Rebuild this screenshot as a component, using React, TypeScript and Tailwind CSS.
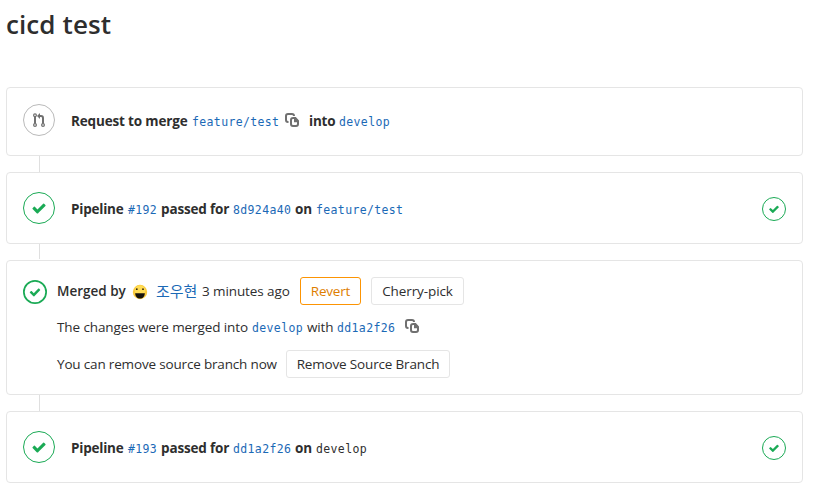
import type { ReactNode } from 'react';

const SANS = "font-['Open_Sans','Noto_Sans_CJK_KR',sans-serif]";

const CHECK =
  'M6.278 7.697L5.045 6.464a.296.296 0 0 0-.42-.002l-.613.614a.298.298 0 0 0 .002.42l1.91 1.909a.5.5 0 0 0 .703.005l.265-.265L9.997 6.04a.291.291 0 0 0-.009-.408l-.614-.614a.29.29 0 0 0-.408-.009L6.278 7.697z';

function Check({ className }: { className: string }) {
  return (
    <span className={`flex shrink-0 items-center justify-center rounded-full border border-[#1aaa55] ${className}`}>
      <svg viewBox="0 0 14 14" className="size-full shrink-0" fill="#1aaa55">
        <path d={CHECK} />
      </svg>
    </span>
  );
}

function MergedStatus() {
  return (
    <svg viewBox="0 0 14 14" className="size-6 shrink-0" fill="#1aaa55">
      <path fillRule="evenodd" d="M0 7a7 7 0 1 1 14 0A7 7 0 0 1 0 7zm13 0A6 6 0 1 0 1 7a6 6 0 0 0 12 0z" />
      <path d={CHECK} />
    </svg>
  );
}

function CopyIcon() {
  return (
    <svg viewBox="0 0 16 16" className="size-4 shrink-0" fill="none" stroke="#707070" strokeWidth="2">
      <path d="M4.5 10H4a2 2 0 0 1-2-2V4a2 2 0 0 1 2-2h4a2 2 0 0 1 2 2" />
      <path d="M8.5 6h2.9L14 8.8V12a2 2 0 0 1-2 2H9a2 2 0 0 1-2-2V8a2 2 0 0 1 2-2z" />
      <path d="M10 5.5v4.7h4.5L13.5 7.5z" fill="#707070" stroke="none" />
    </svg>
  );
}

function MergeRequestIcon() {
  return (
    <svg viewBox="0 0 16 16" className="size-4" fill="none" stroke="#707070">
      <path d="M4 4v8M12 12V6a2 2 0 0 0-2-2H8" strokeWidth="2" />
      <path d="M9 1v6L6 4z" fill="#707070" stroke="none" />
      <circle cx="4" cy="3.3" r="1.4" fill="#fff" strokeWidth="1.2" />
      <circle cx="4" cy="13" r="1.4" fill="#fff" strokeWidth="1.2" />
      <circle cx="12" cy="13" r="1.4" fill="#fff" strokeWidth="1.2" />
    </svg>
  );
}

function Avatar() {
  return (
    <svg viewBox="0 0 16 16" className="size-4 shrink-0">
      <circle cx="8" cy="8" r="7.2" fill="#fbcb3c" />
      <circle cx="8" cy="6.5" r="5.2" fill="#ffdc55" />
      <circle cx="4.8" cy="5.2" r="0.9" fill="#33240d" />
      <circle cx="11" cy="5.2" r="0.9" fill="#33240d" />
      <path d="M3.2 9.2h9.6c0 3-1.8 5.4-4.8 5.4S3.2 12.2 3.2 9.2z" fill="#17120b" />
    </svg>
  );
}

function T({ className, children }: { className: string; children: ReactNode }) {
  return <span className={`shrink-0 whitespace-nowrap ${className}`}>{children}</span>;
}

function Mono({ className, children }: { className: string; children: ReactNode }) {
  return (
    <span
      className={`shrink-0 whitespace-nowrap pt-px font-['DejaVu_Sans_Mono',monospace] text-[11.5px] tracking-[0.36px] ${className}`}
    >
      {children}
    </span>
  );
}

function Button({ className, children }: { className: string; children: ReactNode }) {
  return (
    <button className={`flex h-7 shrink-0 items-center justify-center whitespace-nowrap rounded-[3px] border ${className}`}>
      {children}
    </button>
  );
}

function Connector({ className }: { className: string }) {
  return <div className={`ml-[33px] w-px bg-[#dfdfdf] ${className}`} />;
}

const CARD = 'flex rounded-[4px] border border-[#e5e5e5] bg-white px-4';

function PipelineCard({ id, sha, children }: { id: string; sha: string; children: ReactNode }) {
  return (
    <section className={`${CARD} h-[72px] pt-[19px]`}>
      <Check className="size-8" />
      <div className="ml-4 flex h-[34px] flex-1 items-center">
        <T className="w-[57px] font-bold tracking-[-0.22px]">Pipeline</T>
        <Mono className="w-[33px] text-[#1b69b6]">{id}</Mono>
        <T className="w-[72px] font-bold tracking-[-0.16px]">passed for</T>
        <Mono className="w-[62px] text-[#1b69b6]">{sha}</Mono>
        <T className="w-[21px] font-bold tracking-[-0.1px]">on</T>
        {children}
      </div>
      <Check className="mt-[5px] size-6" />
    </section>
  );
}

export default function App() {
  return (
    <main className={`h-[492px] w-[815px] overflow-hidden bg-white pl-1.5 pr-3 text-[13.5px] leading-5 text-[#2e2e2e] ${SANS}`}>
      <h1 className="h-[87px] pt-[7px] text-[26px] font-semibold leading-[34px] tracking-[0.1px]">cicd test</h1>

      <section className={`${CARD} h-[69px] pt-4`}>
        <span className="flex size-8 shrink-0 items-center justify-center rounded-full border border-[#bababa]">
          <MergeRequestIcon />
        </span>
        <div className="ml-4 flex h-[34px] items-center">
          <T className="w-[121px] font-bold tracking-[-0.16px]">Request to merge</T>
          <Mono className="w-[92px] text-[#1b69b6]">feature/test</Mono>
          <span className="mb-0.5 w-[25px]">
            <CopyIcon />
          </span>
          <T className="w-[30px] font-bold tracking-[-0.22px]">into</T>
          <Mono className="text-[#1b69b6]">develop</Mono>
        </div>
      </section>
      <Connector className="h-4" />

      <PipelineCard id="#192" sha="8d924a40">
        <Mono className="text-[#1b69b6]">feature/test</Mono>
      </PipelineCard>
      <Connector className="mb-px h-[15px]" />

      <section className={`${CARD} h-[135px] pt-4`}>
        <div className="pt-[3px]">
          <MergedStatus />
        </div>
        <div className="ml-2.5 flex-1 tracking-[-0.17px]">
          <div className="flex h-7 items-center">
            <T className="w-[75px] font-semibold tracking-[0px]">Merged by</T>
            <span className="mt-0.5 w-6">
              <Avatar />
            </span>
            <T className="w-[46px] text-[15px] tracking-[0px] text-[#1b69b6]">조우현</T>
            <T className="w-[98px] tracking-[-0.1px]">3 minutes ago</T>
            <Button className="mr-2.5 w-[61px] border-[#fc9403] text-[#de7e00]">Revert</Button>
            <Button className="w-[93px] border-[#e5e5e5] tracking-[-0.1px]">Cherry-pick</Button>
          </div>
          <div className="mt-2 flex h-7 items-center">
            <T className="w-[195px] tracking-[-0.1px]">The changes were merged into</T>
            <Mono className="w-[55px] text-[#1b69b6]">develop</Mono>
            <T className="w-[30px]">with</T>
            <Mono className="w-[67px] text-[#1b69b6]">dd1a2f26</Mono>
            <span className="mb-0.5">
              <CopyIcon />
            </span>
          </div>
          <div className="mt-[9px] flex h-7 items-center">
            <T className="w-[229px]">You can remove source branch now</T>
            <Button className="w-[164px] border-[#e5e5e5]">Remove Source Branch</Button>
          </div>
        </div>
      </section>
      <Connector className="h-4" />

      <PipelineCard id="#193" sha="dd1a2f26">
        <Mono className="text-[#2e2e2e]">develop</Mono>
      </PipelineCard>
    </main>
  );
}
